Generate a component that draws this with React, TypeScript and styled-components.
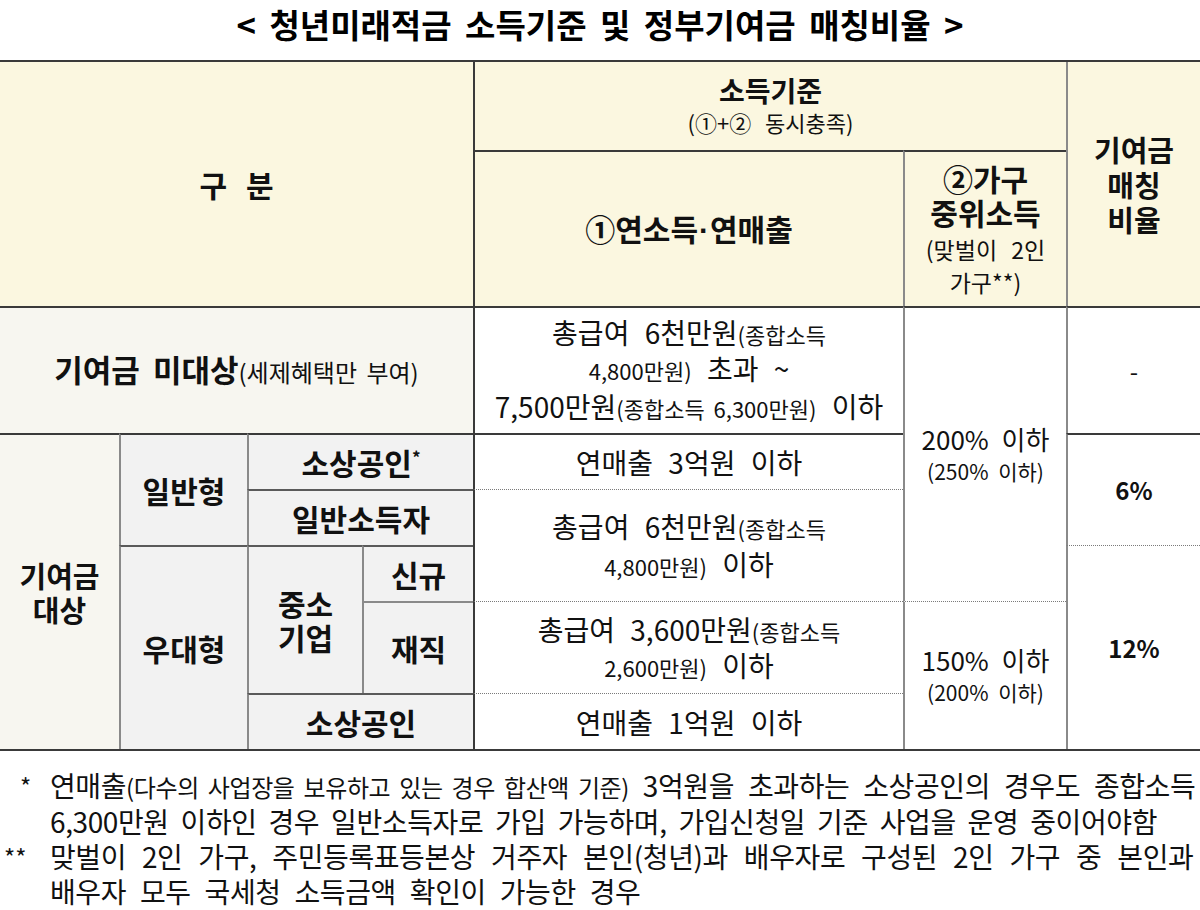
import React from "react";
import styled, { createGlobalStyle } from "styled-components";

const Global = createGlobalStyle`
  html, body { margin: 0; padding: 0; background: #ffffff; }
  body { font-family: "Noto Sans CJK KR", "Noto Sans", sans-serif; color: #111; }
`;

const Page = styled.div`
  width: 1200px;
  background: #fff;
`;

const Title = styled.h1`
  margin: 0;
  height: 61px;
  display: flex;
  align-items: center;
  justify-content: center;
  font-size: 33px;
  font-weight: 700;
  word-spacing: 6px;
  color: #000;
  line-height: 1;
  padding-bottom: 12px;
  box-sizing: border-box;
`;

const Table = styled.div`
  display: grid;
  grid-template-columns: 119px 128px 115px 111px 430px 163px 1fr;
  grid-template-rows: 88px 156px 127px 56px 56px 56px 92px 56px;
  border-top: 2px solid #3a3a3a;
  border-bottom: 2px solid #3a3a3a;
  margin-top: -1px;
`;

type Line = "dark" | "gray" | "mid" | "dot" | "none";
type Bg = "head" | "soft" | "gray" | "white";

const lineStyle = (l: Line) => {
  switch (l) {
    case "dark":
      return "2px solid #3a3a3a";
    case "gray":
      return "2px solid #8a8a8a";
    case "mid":
      return "2px solid #5a5a5a";
    case "dot":
      return "1px dotted #7a7a7a";
    default:
      return "none";
  }
};

const bgColor: Record<Bg, string> = {
  head: "#fbf7e0",
  soft: "#f7f6f0",
  gray: "#f2f2f2",
  white: "#ffffff",
};

const Cell = styled.div<{
  $col: string;
  $row: string;
  $bg: Bg;
  $top?: Line;
  $left?: Line;
}>`
  grid-column: ${(p) => p.$col};
  grid-row: ${(p) => p.$row};
  background: ${(p) => bgColor[p.$bg]};
  border-top: ${(p) => lineStyle(p.$top ?? "none")};
  border-left: ${(p) => lineStyle(p.$left ?? "none")};
  box-sizing: border-box;
  display: flex;
  flex-direction: column;
  align-items: center;
  justify-content: center;
  text-align: center;
  color: #111;
`;

const Bold = styled.div<{ $size?: number; $lh?: number; $ws?: number }>`
  font-weight: 700;
  font-size: ${(p) => p.$size ?? 30}px;
  line-height: ${(p) => p.$lh ?? 34}px;
  white-space: nowrap;
  word-spacing: ${(p) => p.$ws ?? 6}px;
`;

const Text = styled.div<{ $size?: number; $lh?: number; $ws?: number }>`
  font-weight: 400;
  font-size: ${(p) => p.$size ?? 28}px;
  line-height: ${(p) => p.$lh ?? 34}px;
  white-space: nowrap;
  word-spacing: ${(p) => p.$ws ?? 9}px;
`;

const Small = styled.span<{ $size?: number }>`
  font-size: ${(p) => p.$size ?? 22}px;
  font-weight: 400;
  word-spacing: 4px;
`;

const Dot = styled.span`
  font-family: "Liberation Sans", Arial, sans-serif;
  margin: 0 1px;
`;

const Sup = styled.sup`
  font-size: 17px;
  vertical-align: 11px;
  line-height: 0;
`;

const Notes = styled.div`
  padding-top: 17px;
  display: grid;
  grid-template-columns: 50px 1fr;
  font-size: 28px;
  line-height: 35px;
  color: #111;
`;

const Marker = styled.div<{ $indent: number }>`
  padding-left: ${(p) => p.$indent}px;
  white-space: nowrap;
  font-size: 24px;
`;

const NoteText = styled.div<{ $ws?: number }>`
  white-space: nowrap;
  word-spacing: ${(p) => p.$ws ?? 8}px;
  letter-spacing: -0.4px;
`;

export default function App() {
  return (
    <Page>
      <Global />
      <Title>&lt; 청년미래적금 소득기준 및 정부기여금 매칭비율 &gt;</Title>
      <Table>
        {/* header */}
        <Cell $col="1 / 5" $row="1 / 3" $bg="head">
          <Bold $size={30} $ws={12}>
            구 분
          </Bold>
        </Cell>
        <Cell $col="5 / 7" $row="1 / 2" $bg="head" $left="dark">
          <Bold $size={28} $lh={32}>소득기준</Bold>
          <Text $size={22} $lh={32}>(①+② 동시충족)</Text>
        </Cell>
        <Cell $col="7 / 8" $row="1 / 3" $bg="head" $left="gray">
          <Bold $size={29} $lh={35}>기여금</Bold>
          <Bold $size={29} $lh={35}>매칭</Bold>
          <Bold $size={29} $lh={35}>비율</Bold>
        </Cell>
        <Cell $col="5 / 6" $row="2 / 3" $bg="head" $left="dark" $top="dark">
          <Bold $size={30}>
            ①연소득<Dot>·</Dot>연매출
          </Bold>
        </Cell>
        <Cell $col="6 / 7" $row="2 / 3" $bg="head" $left="gray" $top="dark">
          <Bold $size={30} $lh={32}>②가구</Bold>
          <Bold $size={30} $lh={37}>중위소득</Bold>
          <Text $size={23} $lh={36}>(맞벌이 2인</Text>
          <Text $size={23} $lh={30}>가구**)</Text>
        </Cell>

        {/* 기여금 미대상 */}
        <Cell $col="1 / 5" $row="3 / 4" $bg="soft" $top="dark">
          <Bold $size={31}>
            기여금 미대상<Small $size={24}>(세제혜택만 부여)</Small>
          </Bold>
        </Cell>
        <Cell $col="5 / 6" $row="3 / 4" $bg="white" $top="dark" $left="dark">
          <Text $lh={34}>
            총급여 6천만원<Small>(종합소득</Small>
          </Text>
          <Text $lh={35}>
            <Small>4,800만원)</Small> 초과 ~
          </Text>
          <Text $lh={36}>
            7,500만원<Small>(종합소득 6,300만원)</Small> 이하
          </Text>
        </Cell>
        <Cell $col="6 / 7" $row="3 / 7" $bg="white" $top="dark" $left="gray">
          <Text $size={26} $lh={32} $ws={7}>
            200% 이하
          </Text>
          <Text $size={21} $lh={32} $ws={5}>
            (250% 이하)
          </Text>
        </Cell>
        <Cell $col="7 / 8" $row="3 / 4" $bg="white" $top="dark" $left="gray">
          <Text $size={24}>-</Text>
        </Cell>

        {/* 기여금 대상 */}
        <Cell $col="1 / 2" $row="4 / 9" $bg="soft" $top="dark">
          <Bold $size={29}>기여금</Bold>
          <Bold $size={29}>대상</Bold>
        </Cell>
        <Cell $col="2 / 3" $row="4 / 6" $bg="gray" $top="dark" $left="gray">
          <Bold>일반형</Bold>
        </Cell>
        <Cell $col="3 / 5" $row="4 / 5" $bg="gray" $top="dark" $left="gray">
          <Bold>
            소상공인<Sup>*</Sup>
          </Bold>
        </Cell>
        <Cell $col="5 / 6" $row="4 / 5" $bg="white" $top="dark" $left="dark">
          <Text>연매출 3억원 이하</Text>
        </Cell>
        <Cell $col="7 / 8" $row="4 / 6" $bg="white" $top="dark" $left="gray">
          <Bold $size={24}>6%</Bold>
        </Cell>

        <Cell $col="3 / 5" $row="5 / 6" $bg="gray" $top="mid" $left="gray">
          <Bold>일반소득자</Bold>
        </Cell>
        <Cell $col="5 / 6" $row="5 / 7" $bg="white" $top="dot" $left="dark">
          <Text $lh={36}>
            총급여 6천만원<Small>(종합소득</Small>
          </Text>
          <Text $lh={36}>
            <Small>4,800만원)</Small> 이하
          </Text>
        </Cell>

        <Cell $col="2 / 3" $row="6 / 9" $bg="gray" $top="mid" $left="gray">
          <Bold>우대형</Bold>
        </Cell>
        <Cell $col="3 / 4" $row="6 / 8" $bg="gray" $top="mid" $left="gray">
          <Bold>중소</Bold>
          <Bold>기업</Bold>
        </Cell>
        <Cell $col="4 / 5" $row="6 / 7" $bg="gray" $top="mid" $left="gray">
          <Bold>신규</Bold>
        </Cell>
        <Cell $col="7 / 8" $row="6 / 9" $bg="white" $top="dot" $left="gray">
          <Bold $size={24}>12%</Bold>
        </Cell>

        <Cell $col="4 / 5" $row="7 / 8" $bg="gray" $top="gray" $left="gray">
          <Bold>재직</Bold>
        </Cell>
        <Cell $col="5 / 6" $row="7 / 8" $bg="white" $top="dot" $left="dark">
          <Text $lh={34}>
            총급여 3,600만원<Small>(종합소득</Small>
          </Text>
          <Text $lh={34}>
            <Small>2,600만원)</Small> 이하
          </Text>
        </Cell>
        <Cell $col="6 / 7" $row="7 / 9" $bg="white" $top="dot" $left="gray">
          <Text $size={26} $lh={32} $ws={7}>
            150% 이하
          </Text>
          <Text $size={21} $lh={32} $ws={5}>
            (200% 이하)
          </Text>
        </Cell>

        <Cell $col="3 / 5" $row="8 / 9" $bg="gray" $top="mid" $left="gray">
          <Bold>소상공인</Bold>
        </Cell>
        <Cell $col="5 / 6" $row="8 / 9" $bg="white" $top="dot" $left="dark">
          <Text>연매출 1억원 이하</Text>
        </Cell>
      </Table>

      <Notes>
        <Marker $indent={20}>*</Marker>
        <NoteText>
          연매출<Small $size={24}>(다수의 사업장을 보유하고 있는 경우 합산액 기준)</Small> 3억원을
          초과하는 소상공인의 경우도 종합소득
        </NoteText>
        <div />
        <NoteText $ws={6}>
          6,300만원 이하인 경우 일반소득자로 가입 가능하며, 가입신청일 기준 사업을 운영 중이어야함
        </NoteText>
        <Marker $indent={4}>**</Marker>
        <NoteText $ws={10}>
          맞벌이 2인 가구, 주민등록표등본상 거주자 본인(청년)과 배우자로 구성된 2인 가구 중 본인과
        </NoteText>
        <div />
        <NoteText>배우자 모두 국세청 소득금액 확인이 가능한 경우</NoteText>
      </Notes>
    </Page>
  );
}
